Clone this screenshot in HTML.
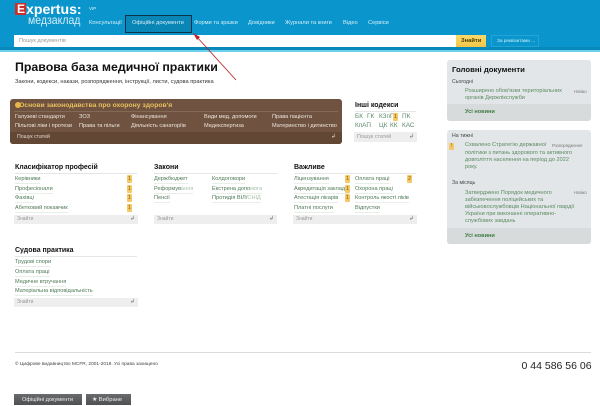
<!DOCTYPE html>
<html lang="uk">
<head>
<meta charset="utf-8">
<style>
html,body{margin:0;padding:0;background:#fff}
body{width:600px;height:406px;position:relative;overflow:hidden;font-family:"Liberation Sans",sans-serif;color:#222}
.a{position:absolute;white-space:nowrap}
.b{position:absolute}
.n{font-size:5.7px;color:#d5eef8;line-height:8px;top:19px}
.h{font-size:7px;font-weight:bold;color:#111;line-height:9px}
.g{font-size:5.6px;color:#4f7a56;line-height:8px;border-bottom:1px solid #e8efe8}
.w{font-size:5.6px;color:#eee6dc;line-height:8px}
.k{font-size:6.4px;color:#5a8a68;line-height:8px}
.bd{position:absolute;width:5px;height:8px;background:#f5c766;border-radius:1px;font-size:5px;line-height:8px;text-align:center;color:#7a5510}
.sr{position:absolute;height:9px;background:#eeeeee;font-size:5px;line-height:9px;color:#999;text-indent:3px}
.sr i{position:absolute;right:3px;top:0;font-style:normal;color:#777;font-size:6px}
.ln{position:absolute;height:1px;background:#e6e6e6}
.s{font-size:5.6px;color:#5a8a60;line-height:7.2px}
.t{font-size:5.2px;color:#444;line-height:8px}
.m{font-size:4.2px;color:#777;line-height:8px}
</style>
</head>
<body>
<div class="b" style="left:0;top:0;width:600px;height:47px;background:#0a96cc"></div>
<div class="b" style="left:0;top:47px;width:600px;height:3px;background:#0888b8"></div>
<div class="b" style="left:0;top:50px;width:600px;height:2px;background:#6fd0ee"></div>

<div class="b" style="left:15px;top:3px;width:11px;height:12px;background:#c9302c"></div>
<div class="a" style="left:17px;top:3px;font-size:12px;font-weight:bold;line-height:12px;color:#fff">E</div>
<div class="a" style="left:26px;top:2px;font-size:14.1px;font-weight:bold;line-height:15px;color:#fff">xpertus:</div>
<div class="a" style="left:28px;top:14px;font-size:12px;line-height:12px;color:#d5eef8;transform:scaleX(.875);transform-origin:0 0">медзаклад</div>
<div class="a" style="left:89px;top:6px;font-size:4.5px;line-height:6px;color:#e0f3fa">VIP</div>

<div class="b" style="left:125px;top:15px;width:67px;height:18px;background:#0a86b6;border:1px solid #0c3348;box-sizing:border-box"></div>
<div class="a n" style="left:89px">Консультації</div>
<div class="a n" style="left:132px">Офіційні документи</div>
<div class="a n" style="left:194px">Форми та зразки</div>
<div class="a n" style="left:248px">Довідники</div>
<div class="a n" style="left:285px">Журнали та книги</div>
<div class="a n" style="left:343px">Відео</div>
<div class="a n" style="left:368px">Сервіси</div>

<div class="b" style="left:14px;top:35px;width:443px;height:11.5px;background:#fff"></div>
<div class="a" style="left:19px;top:37px;font-size:5.6px;line-height:8px;color:#999">Пошук документів</div>
<div class="b" style="left:456px;top:35px;width:30px;height:11.5px;background:linear-gradient(#fbd968,#f3c64a)"></div>
<div class="a" style="left:461px;top:37px;font-size:5.8px;line-height:8px;color:#4a3a00;font-weight:bold">Знайти</div>
<div class="b" style="left:491px;top:35px;width:48px;height:11.5px;border:1px solid #1fa5d8;box-sizing:border-box"></div>
<div class="a" style="left:497px;top:37px;font-size:4.7px;line-height:8px;color:#cfeefa">За реквізитами ...</div>

<svg class="b" style="left:0;top:0" width="600" height="90">
<path d="M236 80L196 36" stroke="#b8242c" stroke-width="0.9" fill="none"/>
<path d="M193 33L200 37L197 40Z" fill="#b8242c"/>
</svg>

<div class="a" style="left:15px;top:59px;font-size:12.35px;font-weight:bold;line-height:17px;color:#111">Правова база медичної практики</div>
<div class="a" style="left:15px;top:78px;font-size:5.66px;line-height:8px;color:#333">Закони, кодекси, накази, розпорядження, інструкції, листи, судова практика</div>

<!-- brown -->
<div class="b" style="left:10px;top:99px;width:332px;height:45px;background:#6f5240;border-radius:3px"></div>
<div class="ln" style="left:14px;top:111px;width:324px;background:#836a56"></div>
<div class="b" style="left:10px;top:132px;width:332px;height:12px;background:#624735;border-radius:0 0 3px 3px"></div>
<div class="a" style="left:19px;top:101px;font-size:6.8px;font-weight:bold;line-height:9px;color:#e8c060">Основи законодавства про охорону здоров'я</div>
<div class="b" style="left:15px;top:102px;width:6px;height:6px;border-radius:50%;background:#e8b548"></div>
<div class="a w" style="left:15px;top:113px">Галузеві стандарти</div>
<div class="a w" style="left:79px;top:113px">ЗОЗ</div>
<div class="a w" style="left:131px;top:113px">Фінансування</div>
<div class="a w" style="left:204px;top:113px">Види мед. допомоги</div>
<div class="a w" style="left:272px;top:113px">Права пацієнта</div>
<div class="a w" style="left:15px;top:122px">Пільгові ліки і протези</div>
<div class="a w" style="left:79px;top:122px">Права та пільги</div>
<div class="a w" style="left:131px;top:122px">Діяльність санаторіїв</div>
<div class="a w" style="left:204px;top:122px">Медекспертиза</div>
<div class="a w" style="left:272px;top:122px">Материнство і дитинство</div>
<div class="a" style="left:17px;top:133px;font-size:5.2px;line-height:8px;color:#e0d6cc">Пошук статей</div>
<div class="a" style="left:331px;top:133px;font-size:6px;line-height:8px;color:#d8cec4">↲</div>

<!-- Codes -->
<div class="a h" style="left:355px;top:101px">Інші кодекси</div>
<div class="ln" style="left:355px;top:111px;width:61px"></div>
<div class="a k" style="left:355px;top:113px">БК</div>
<div class="a k" style="left:367px;top:113px">ГК</div>
<div class="a k" style="left:379px;top:113px">КЗпП</div>
<div class="bd" style="left:393px;top:113px">1</div>
<div class="a k" style="left:402px;top:113px">ПК</div>
<div class="a k" style="left:355px;top:122px">КпАП</div>
<div class="a k" style="left:379px;top:122px">ЦК</div>
<div class="a k" style="left:390px;top:122px">КК</div>
<div class="a k" style="left:402px;top:122px">КАС</div>
<div class="sr" style="left:354px;top:132px;width:63px;height:10px;line-height:10px;font-size:5.4px">Пошук статей<i>↲</i></div>

<!-- Classifier -->
<div class="a h" style="left:15px;top:163px">Класифікатор професій</div>
<div class="ln" style="left:15px;top:173px;width:122px"></div>
<div class="a g" style="left:15px;top:175px">Керівники</div><div class="bd" style="left:127px;top:175px">1</div>
<div class="a g" style="left:15px;top:184.5px">Професіонали</div><div class="bd" style="left:127px;top:184.5px">1</div>
<div class="a g" style="left:15px;top:194px">Фахівці</div><div class="bd" style="left:127px;top:194px">1</div>
<div class="a g" style="left:15px;top:203.5px">Абетковий покажчик</div><div class="bd" style="left:127px;top:203.5px">1</div>
<div class="sr" style="left:14px;top:215px;width:124px">Знайти<i>↲</i></div>

<!-- Laws -->
<div class="a h" style="left:154px;top:163px">Закони</div>
<div class="ln" style="left:154px;top:173px;width:123px"></div>
<div class="a g" style="left:154px;top:175px">Держбюджет</div>
<div class="a g" style="left:154px;top:184.5px">Реформув<span style="color:#a8c0ac">ання</span></div>
<div class="a g" style="left:154px;top:194px">Пенсії</div>
<div class="a g" style="left:212px;top:175px">Колдоговори</div>
<div class="a g" style="left:212px;top:184.5px">Екстрена допо<span style="color:#a8c0ac">мога</span></div>
<div class="a g" style="left:212px;top:194px">Протидія ВІЛ/<span style="color:#a8c0ac">СНІД</span></div>
<div class="sr" style="left:154px;top:215px;width:123px">Знайти<i>↲</i></div>

<!-- Important -->
<div class="a h" style="left:294px;top:163px">Важливе</div>
<div class="ln" style="left:294px;top:173px;width:122px"></div>
<div class="a g" style="left:294px;top:175px">Ліцензування</div><div class="bd" style="left:345px;top:175px">1</div>
<div class="a g" style="left:294px;top:184.5px">Акредитація закладів</div><div class="bd" style="left:345px;top:184.5px">1</div>
<div class="a g" style="left:294px;top:194px">Атестація лікарів</div><div class="bd" style="left:345px;top:194px">1</div>
<div class="a g" style="left:294px;top:203.5px">Платні послуги</div>
<div class="a g" style="left:355px;top:175px">Оплата праці</div><div class="bd" style="left:407px;top:175px">2</div>
<div class="a g" style="left:355px;top:184.5px">Охорона праці</div>
<div class="a g" style="left:355px;top:194px">Контроль якості ліків</div>
<div class="a g" style="left:355px;top:203.5px">Відпустки</div>
<div class="sr" style="left:293px;top:215px;width:124px">Знайти<i>↲</i></div>

<!-- Court -->
<div class="a h" style="left:15px;top:246px">Судова практика</div>
<div class="ln" style="left:15px;top:256px;width:122px"></div>
<div class="a g" style="left:15px;top:258px">Трудові спори</div>
<div class="a g" style="left:15px;top:268px">Оплата праці</div>
<div class="a g" style="left:15px;top:277.5px">Медичне втручання</div>
<div class="a g" style="left:15px;top:287px">Матеріальна відповідальність</div>
<div class="sr" style="left:14px;top:298px;width:124px">Знайти<i>↲</i></div>

<!-- Right panel 1 -->
<div class="b" style="left:447px;top:60px;width:144px;height:61px;background:#e3e6e8;border-radius:3px"></div>
<div class="b" style="left:447px;top:104px;width:144px;height:17px;background:#d8dbdc;border-radius:0 0 3px 3px"></div>
<div class="a" style="left:452px;top:64px;font-size:7.75px;font-weight:bold;line-height:11px;color:#111">Головні документи</div>
<div class="a t" style="left:452px;top:78px">Сьогодні</div>
<div class="a s" style="left:465px;top:87.5px">Розширено обов'язки територіальних<br>органів Держлікслужби</div>
<div class="a m" style="left:574px;top:88px">Новіко</div>
<div class="a" style="left:465px;top:108px;font-size:5.6px;font-weight:bold;line-height:8px;color:#3d7a40">Усі новини</div>

<!-- Right panel 2 -->
<div class="b" style="left:447px;top:130px;width:144px;height:113.5px;background:#e3e6e8;border-radius:3px"></div>
<div class="b" style="left:447px;top:228px;width:144px;height:15.5px;background:#d8dbdc;border-radius:0 0 3px 3px"></div>
<div class="a t" style="left:452px;top:132px">На тижні</div>
<div class="bd" style="left:449px;top:143px;width:5px;height:7px;line-height:7px">!</div>
<div class="a s" style="left:465px;top:142.3px;line-height:7.33px">Схвалено Стратегію державної<br>політики з питань здорового та активного<br>довголіття населення на період до 2022<br>року.</div>
<div class="a m" style="left:552px;top:142px">Розпорядження</div>
<div class="a t" style="left:452px;top:179px">За місяць</div>
<div class="a s" style="left:465px;top:189.8px;line-height:7.05px">Затверджено Порядок медичного<br>забезпечення поліцейських та<br>військовослужбовців Національної гвардії<br>України при виконанні оперативно-<br>службових завдань</div>
<div class="a m" style="left:574px;top:189px">Новіко</div>
<div class="a" style="left:465px;top:232px;font-size:5.6px;font-weight:bold;line-height:8px;color:#3d7a40">Усі новини</div>

<!-- Footer -->
<div class="ln" style="left:15px;top:352px;width:576px;background:#dcdcdc"></div>
<div class="a" style="left:15px;top:360.5px;font-size:4.8px;line-height:7px;color:#444">© Цифрове видавництво МСFR, 2001-2018. Усі права захищено</div>
<div class="a" style="left:521.5px;top:359.5px;font-size:10.5px;line-height:13px;color:#222">0 44 586 56 06</div>
<div class="b" style="left:14px;top:394px;width:68px;height:11px;background:linear-gradient(#6a6b6d,#4f5052)"></div>
<div class="a" style="left:22px;top:396px;font-size:5.6px;line-height:8px;color:#eee">Офіційні документи</div>
<div class="b" style="left:86px;top:394px;width:45px;height:11px;background:linear-gradient(#6a6b6d,#4f5052)"></div>
<div class="a" style="left:92px;top:396px;font-size:5.8px;line-height:8px;color:#eee">★ Вибране</div>
</body>
</html>
